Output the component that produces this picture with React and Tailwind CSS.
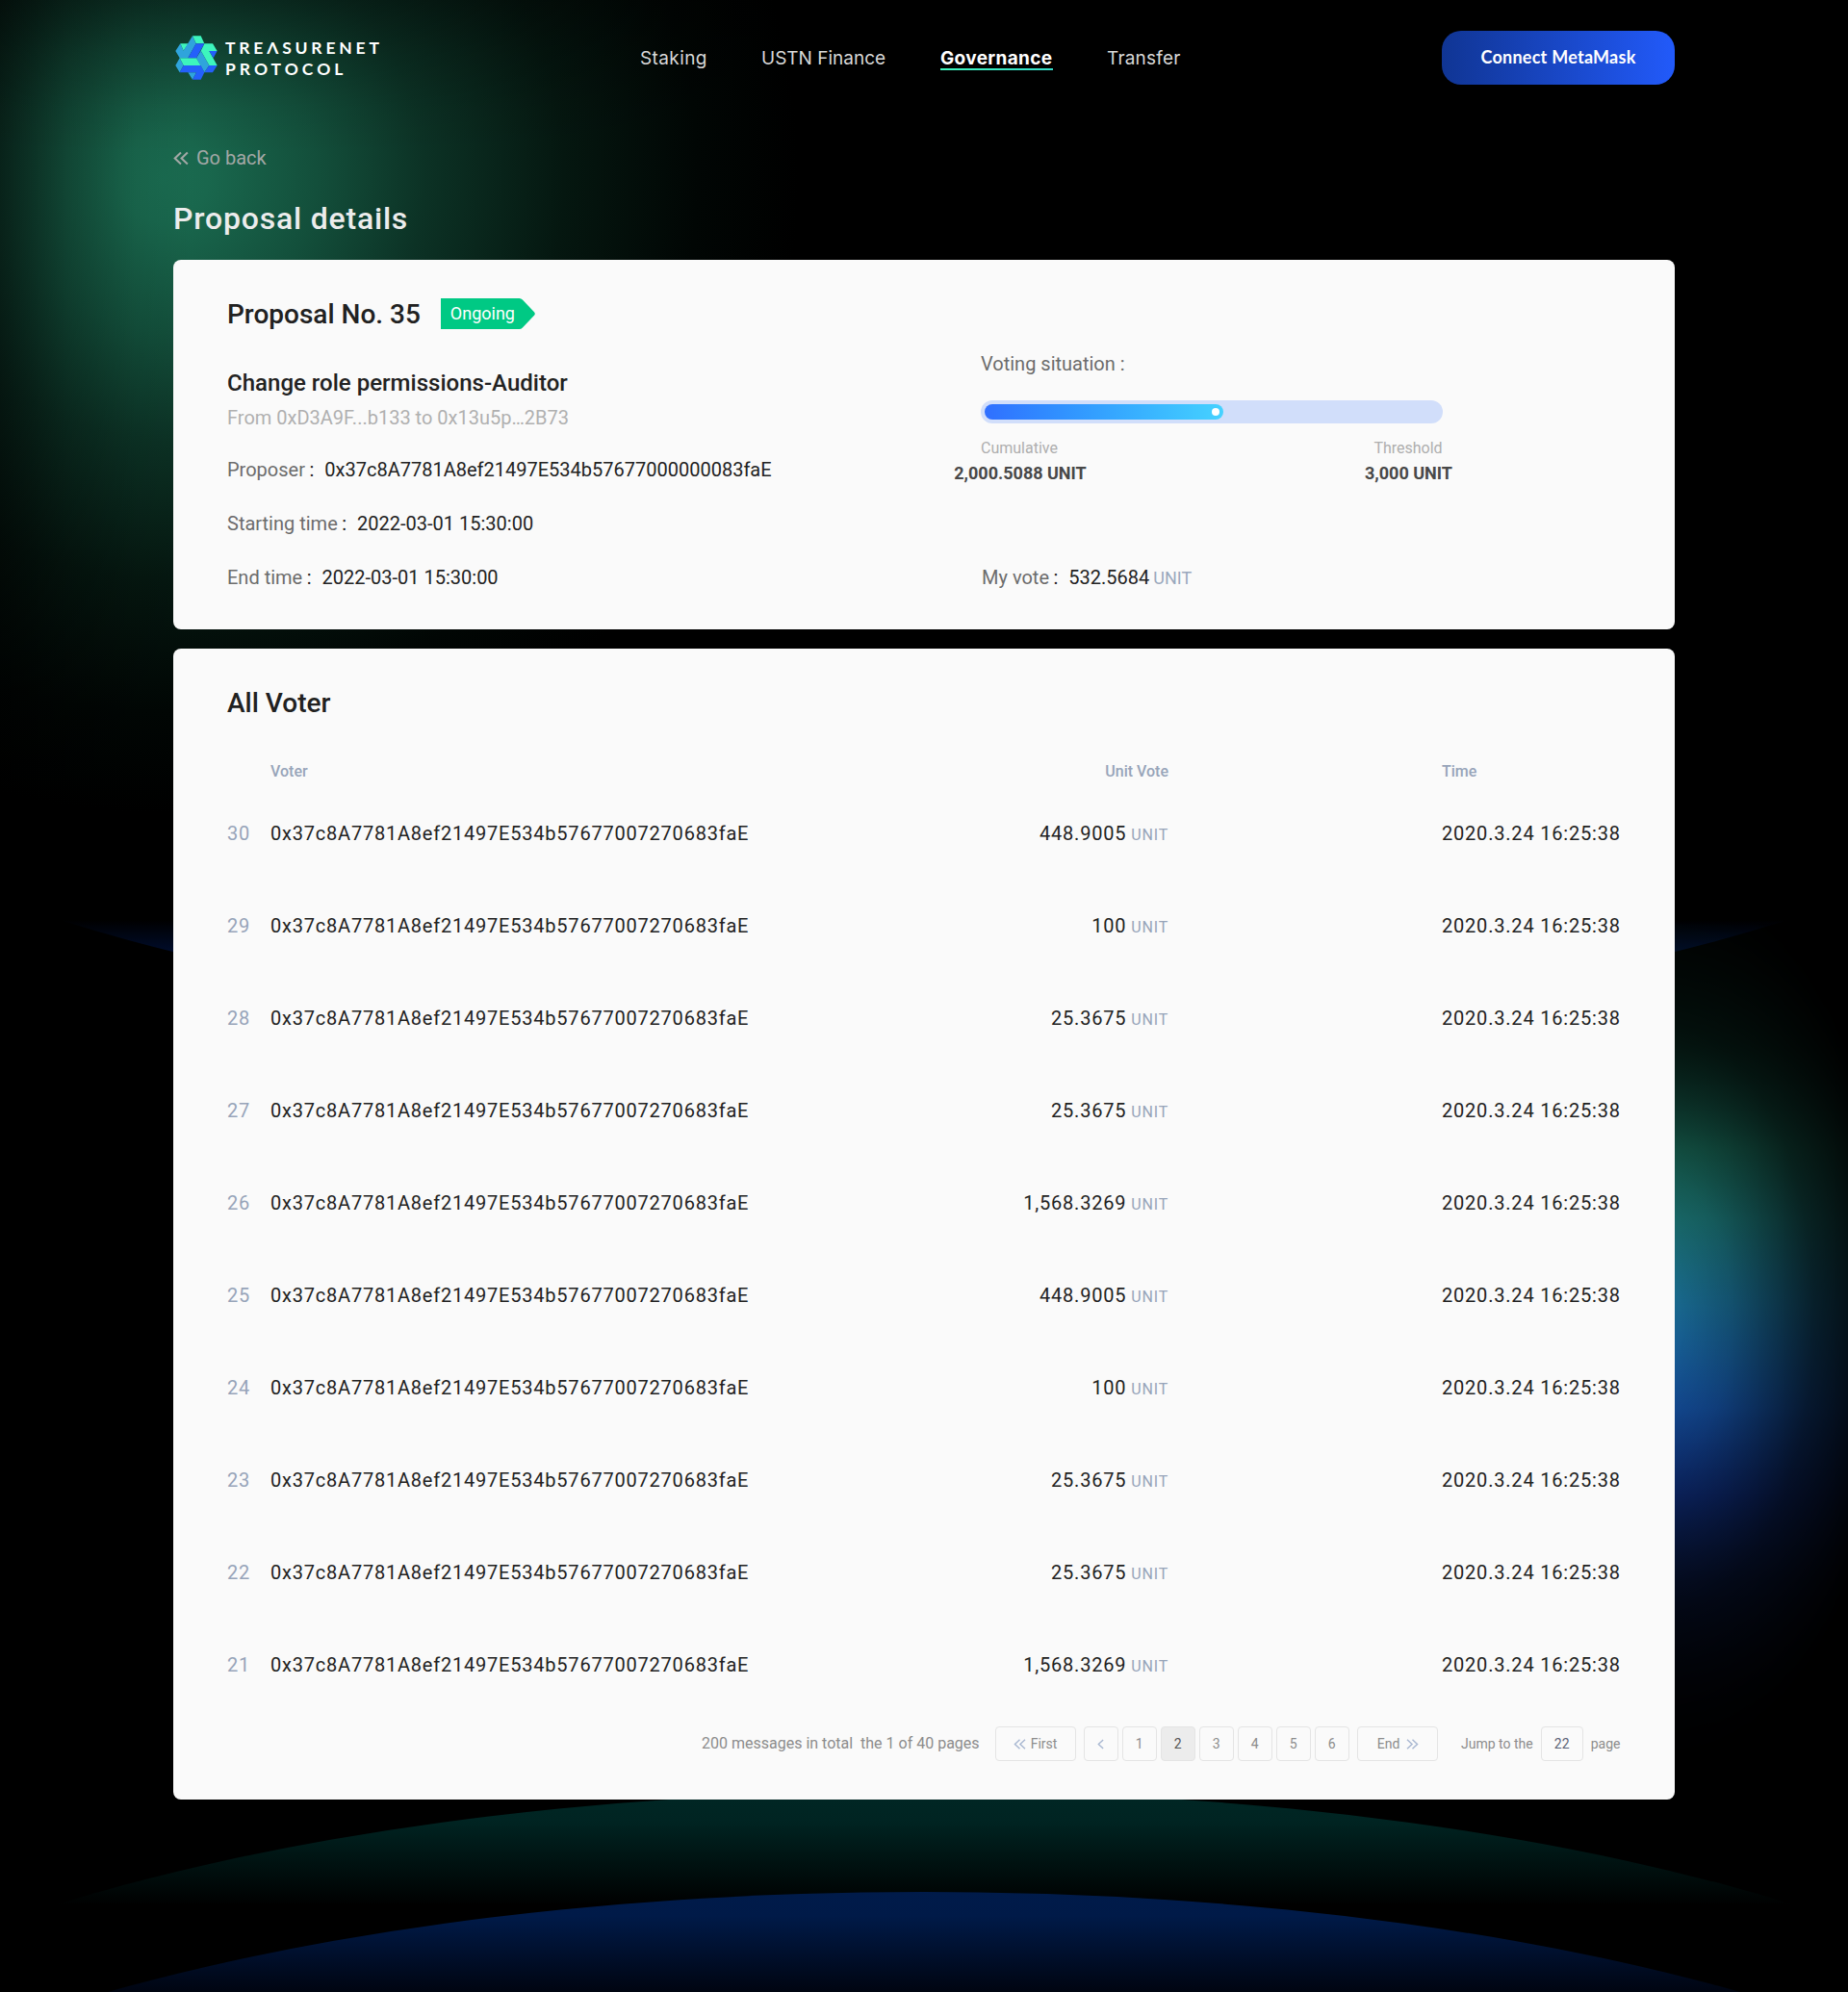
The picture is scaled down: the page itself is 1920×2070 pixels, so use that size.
import React from "react";

const VOTER = "0x37c8A7781A8ef21497E534b57677007270683faE";
const AMOUNTS = ["448.9005", "100", "25.3675", "25.3675", "1,568.3269"];
const ROWS = Array.from({ length: 10 }, (_, i) => ({
  no: 30 - i,
  amount: AMOUNTS[i % 5],
}));

function Backdrop() {
  return (
    <div className="pointer-events-none absolute inset-0 overflow-hidden bg-black">
      <div className="absolute inset-0 bg-[radial-gradient(ellipse_660px_660px_at_170px_185px,#1a6b50_0%,#19674d_7%,#134f3b_24%,#0c3225_41%,#051710_63%,#010604_84%,#000_100%)]" />
      <div className="absolute inset-y-0 left-0 w-[200px] bg-[linear-gradient(90deg,rgba(0,0,0,.55)_0%,rgba(0,0,0,.24)_35%,rgba(0,0,0,.06)_70%,transparent_100%)]" />
      <div className="absolute inset-x-0 top-0 h-[160px] bg-[linear-gradient(180deg,rgba(0,0,0,.38)_0%,rgba(0,0,0,.18)_35%,rgba(0,0,0,.05)_70%,transparent_100%)]" />
      <svg className="absolute inset-0 h-[2070px] w-[1920px]" viewBox="0 0 1920 2070">
        <defs>
          <linearGradient id="arc-mid" gradientUnits="userSpaceOnUse" x1="0" y1="956" x2="0" y2="1075">
            <stop offset="0" stopColor="#000" />
            <stop offset="0.3" stopColor="#000d2e" />
            <stop offset="1" stopColor="#001f5a" />
          </linearGradient>
          <linearGradient id="arc-green" gradientUnits="userSpaceOnUse" x1="0" y1="1870" x2="0" y2="1980">
            <stop offset="0" stopColor="#002624" />
            <stop offset="0.2" stopColor="#002422" />
            <stop offset="1" stopColor="#000" />
          </linearGradient>
          <linearGradient id="arc-blue" gradientUnits="userSpaceOnUse" x1="0" y1="1966" x2="0" y2="2080">
            <stop offset="0" stopColor="#001b4a" />
            <stop offset="0.22" stopColor="#001a48" />
            <stop offset="1" stopColor="#00020a" />
          </linearGradient>
          <clipPath id="clip-mid">
            <rect x="0" y="956" width="1920" height="119" />
          </clipPath>
          <clipPath id="clip-green">
            <rect x="0" y="1800" width="1920" height="180" />
          </clipPath>
        </defs>
        <ellipse cx="960" cy="645" rx="1300" ry="430" fill="url(#arc-mid)" clipPath="url(#clip-mid)" />
        <ellipse cx="961" cy="2291" rx="1310" ry="430" fill="url(#arc-green)" clipPath="url(#clip-green)" />
        <ellipse cx="960" cy="2396" rx="1300" ry="430" fill="url(#arc-blue)" />
      </svg>
      <div className="absolute right-0 top-[960px] h-[900px] w-[180px] bg-[linear-gradient(180deg,#04150f_0%,#0b3529_14%,#196c5a_26%,#1b7474_34%,#18668c_44%,#144e9c_56%,#0f2f80_66%,#0a1c4c_76%,#040a1c_90%,#000_100%)] [mask-image:radial-gradient(ellipse_250px_470px_at_-20px_410px,#000_10%,rgba(0,0,0,.78)_32%,rgba(0,0,0,.3)_66%,transparent_100%)]" />
    </div>
  );
}

function LogoMark() {
  const g = "#3df5bd";
  const l = "#2fa4dc";
  const b = "#2460fa";
  return (
    <svg className="h-[46px] w-11" viewBox="66 50 132 138">
      <path fill={g} d="M120 51h26l11 24h-26zM82 75h25L92 97zM157 75h26l14 23h-25l25 45h-25l-26-46zM80 120h52l14 23H92z" />
      <path fill={l} d="M120 51l11 24-25 45H80l12-23zM82 75l10 22-12 23-13-22zM146 97l26 46-15 22-25-45zM80 120l12 23-12 22-13-22zM106 165h26l-12 22z" />
      <path fill={b} d="M131 75h26l-25 45h-26zM172 98h25l-12 22zM92 143h54l11 22H80zM172 143h25l-14 22h-26zM132 165h25l-11 22h-26z" />
    </svg>
  );
}

function Header() {
  return (
    <header className="flex h-[120px] items-center">
      <div className="flex w-[485px] items-center gap-[8px] pl-[2px]">
        <LogoMark />
        <div className="pt-[2px] font-[Lato] text-[17.5px] font-bold leading-[22px] text-white">
          <div className="tracking-[3.8px]">TREΛSURENET</div>
          <div className="tracking-[4px]">PROTOCOL</div>
        </div>
      </div>
      <nav className="flex items-center gap-14 pt-[2px] font-[Inter] text-[19px] leading-6 text-[#d9d9d9]">
        <a className="w-[70px] whitespace-nowrap tracking-[0.4px]">Staking</a>
        <a className="w-[130px] whitespace-nowrap">USTN Finance</a>
        <a className="relative w-[117px] whitespace-nowrap font-bold tracking-[0.35px] text-white">
          Governance
          <span className="absolute inset-x-0 top-[22px] h-[2px] bg-gradient-to-r from-[#3df5bd] to-[#35dcc8]" />
        </a>
        <a className="whitespace-nowrap tracking-[0.2px]">Transfer</a>
      </nav>
      <button className="ml-auto h-14 w-[242px] rounded-[20px] bg-gradient-to-r from-[#103594] to-[#225afa] pb-[2px] font-[Lato] text-[18px] font-bold tracking-[0.25px] text-white">
        Connect MetaMask
      </button>
    </header>
  );
}

function Chevrons({ className, flip, single, width = 1.6 }) {
  return (
    <svg className={className} viewBox={single ? "0 0 8 12" : "0 0 14 12"} fill="none" stroke="currentColor" strokeWidth={width}>
      <g transform={flip ? "matrix(-1 0 0 1 14 0)" : undefined}>
        <path d="M7 .8 1.5 6 7 11.2" />
        {!single && <path d="M13 .8 7.5 6l5.500 5.200" />}
      </g>
    </svg>
  );
}

function Field({ label, children }) {
  return (
    <div className="flex h-14 items-center whitespace-pre text-xl leading-6 text-[#222]">
      <span className="text-[#6c6c6c]">{label}</span>
      <span className="ml-[4.5px] mr-[11px]">:</span>
      <span>{children}</span>
    </div>
  );
}

function Proposal() {
  return (
    <section className="mt-[23px] flex h-96 rounded-lg bg-[#fafafa] px-14 pt-10">
      <div className="w-[783px]">
        <div className="flex h-8 items-center">
          <h2 className="pt-[2px] text-[28px] font-medium leading-8 text-[#212121]">Proposal No. 35</h2>
          <span className="relative ml-[21px] flex h-8 w-[98px] items-center pl-[10px] text-lg text-white">
            <svg className="absolute inset-0 h-8 w-[98px]" viewBox="0 0 98 32">
              <path fill="#00c984" d="M0 0h81.500q2 0 3.400 1.500L97 14.200q1.600 1.800 0 3.600L84.900 30.500q-1.400 1.500-3.400 1.500H0z" />
            </svg>
            <span className="relative">Ongoing</span>
          </span>
        </div>
        <h3 className="mt-10 text-2xl font-medium leading-8 tracking-[0.02px] text-[#222]">Change role permissions-Auditor</h3>
        <p className="mb-3 mt-1.5 text-xl leading-7 text-[#b0b0b0]">From 0xD3A9F...b133 to 0x13u5p…2B73</p>
        <Field label="Proposer">0x37c8A7781A8ef21497E534b57677000000083faE</Field>
        <Field label="Starting time">2022-03-01 15:30:00</Field>
        <Field label="End time">2022-03-01 15:30:00</Field>
      </div>
      <div className="w-[480px] pt-14">
        <p className="text-xl leading-6 text-[#6c6c6c]">Voting situation :</p>
        <div className="mt-[26px] h-6 rounded-full bg-[#d1defa] p-1">
          <div className="flex h-4 w-[248px] items-center justify-end rounded-full bg-gradient-to-r from-[#306fff] to-[#46d2ff] pr-1">
            <span className="size-2 rounded-full bg-white" />
          </div>
        </div>
        <div className="flex justify-between pt-4">
          <div className="flex w-20 flex-col items-center">
            <span className="text-base leading-5 text-[#aeaeae]">Cumulative</span>
            <span className="ml-[2px] mt-1 whitespace-nowrap text-lg font-bold leading-6 text-[#484848]">2,000.5088 UNIT</span>
          </div>
          <div className="flex w-[71px] flex-col items-center">
            <span className="mr-px text-base leading-5 text-[#aeaeae]">Threshold</span>
            <span className="mt-1 whitespace-nowrap text-lg font-bold leading-6 text-[#484848]">3,000 UNIT</span>
          </div>
        </div>
        <div className="mt-[68px] pl-px">
          <Field label="My vote">
            532.5684<span className="ml-[4px] text-lg leading-none text-[#9aa8bd]">UNIT</span>
          </Field>
        </div>
      </div>
    </section>
  );
}

const GRID = "grid grid-cols-[45px_600px_333px_1fr] items-center";

function PageButton({ children, className = "" }) {
  return (
    <span className={`flex h-9 items-center justify-center rounded-[4px] border border-[#e4e4e4] ${className}`}>{children}</span>
  );
}

function Pagination() {
  return (
    <div className="mt-4 flex h-9 items-center justify-end whitespace-pre text-sm text-[#8c8c8c]">
      <span className="mr-4 text-base">200 messages in total  the 1 of 40 pages</span>
      <PageButton className="mr-2 w-[84px]">
        <Chevrons className="mr-[5px] h-[11px] w-[13px] text-[#a9b8d2]" />
        First
      </PageButton>
      <div className="flex gap-1">
        <PageButton className="w-9">
          <Chevrons single className="h-[11px] w-[7px] text-[#a9b8d2]" />
        </PageButton>
        {[1, 2, 3, 4, 5, 6].map((n) => (
          <PageButton key={n} className={n === 2 ? "w-9 bg-[#ececec] text-[#555]" : "w-9"}>
            {n}
          </PageButton>
        ))}
      </div>
      <PageButton className="ml-2 w-[84px] pl-[2px]">
        End
        <Chevrons flip className="ml-[7px] h-[11px] w-[13px] text-[#a9b8d2]" />
      </PageButton>
      <span className="ml-[24.5px]">Jump to the</span>
      <PageButton className="mx-2 w-11 text-[#5a6275]">22</PageButton>
      <span className="mr-[0.5px]">page</span>
    </div>
  );
}

function Voters() {
  return (
    <section className="mt-5 h-[1196px] rounded-lg bg-[#fafafa] px-14 pt-10">
      <h2 className="h-8 pt-px text-[28px] font-medium leading-8 text-[#212121]">All Voter</h2>
      <div className={`${GRID} mt-10 h-8 text-base font-medium text-[#97a4b9]`}>
        <span />
        <span>Voter</span>
        <span className="text-right">Unit Vote</span>
        <span className="pl-[284px]">Time</span>
      </div>
      {ROWS.map((r) => (
        <div key={r.no} className={`${GRID} h-24 whitespace-nowrap text-xl tracking-[0.8px] text-[#222]`}>
          <span className="text-[#97a4b9]">{r.no}</span>
          <span className="tracking-[0.785px]">{VOTER}</span>
          <span className="text-right">
            {r.amount}
            <span className="ml-[5px] text-base leading-none text-[#97a4b9]">UNIT</span>
          </span>
          <span className="pl-[284px]">2020.3.24 16:25:38</span>
        </div>
      ))}
      <Pagination />
    </section>
  );
}

export default function App() {
  return (
    <div className="relative h-[2070px] w-[1920px] overflow-hidden font-[Roboto,sans-serif]">
      <Backdrop />
      <div className="relative mx-auto w-[1560px]">
        <Header />
        <a className="mt-8 flex h-6 items-center gap-2 text-xl leading-6 text-[#a3a8a6]">
          <Chevrons className="h-[15px] w-4" width={1.8} />
          Go back
        </a>
        <h1 className="mt-[31px] text-[32px] font-medium leading-10 tracking-[0.8px] text-[#ececec]">Proposal details</h1>
        <Proposal />
        <Voters />
      </div>
    </div>
  );
}
